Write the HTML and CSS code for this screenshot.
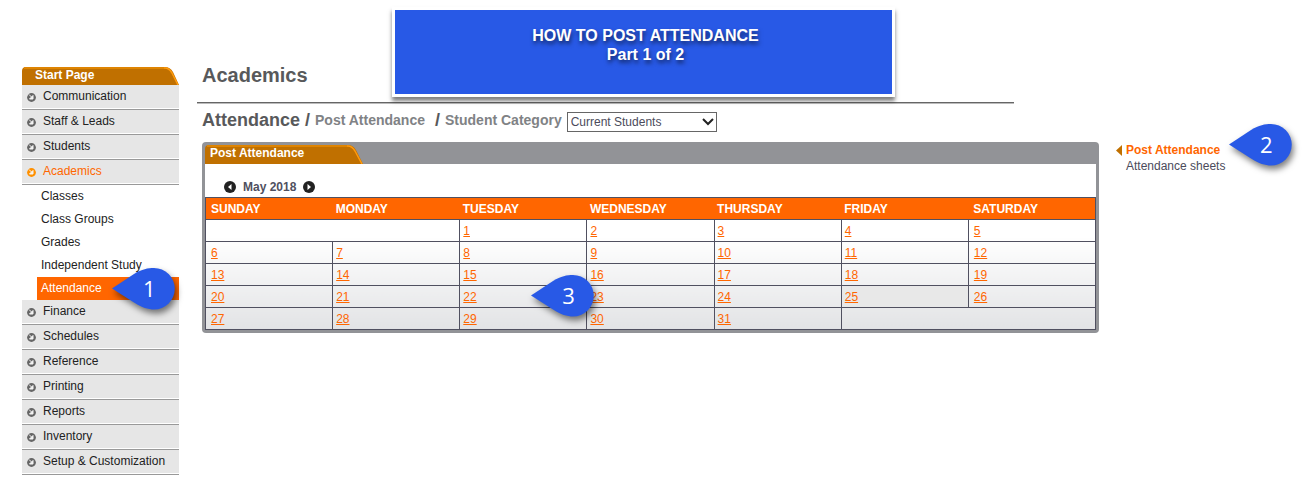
FILE: index.html
```html
<!DOCTYPE html>
<html lang="en">

<head>
    <meta charset="UTF-8">
    <meta name="viewport" content="width=device-width, initial-scale=1.0">
    <title>Post Attendance</title>
    <link rel="stylesheet" href="styles.css">
</head>

<body>

    <!-- Shared shapes -->
    <svg class="defs" width="0" height="0" aria-hidden="true">
        <symbol id="bullet" viewBox="0 0 9 9">
            <circle cx="4.5" cy="4.5" r="4.4" fill="currentColor"/>
            <path d="M2 1.500 L4.500 4 M6 2.500 V6 H2.500 Z" fill="#f4f4f4" stroke="#f4f4f4" stroke-width="1"/>
        </symbol>
        <symbol id="pin" viewBox="0 0 63 42">
            <path d="M0 20.5 L22 6 C30 1 36 0 42 0 A20.75 20.75 0 0 1 42 41.5 C36 41.5 30 39.5 22 34.5 Z" fill="#2859e6"/>
        </symbol>
    </svg>

    <div class="banner">
        <p>HOW TO POST ATTENDANCE</p>
        <p>Part 1 of 2</p>
    </div>

    <div class="page">
        <!-- Left menu -->
        <nav class="sidebar">
            <a href="#" class="tab start-page">
                <svg class="tab-shape" viewBox="0 0 157 18" aria-hidden="true">
                    <path d="M0 18 V4 Q0 0 4 0 H143 Q148 0 151 5 L157 18 Z" fill="#c07000"/>
                    <path d="M2 1 H143 Q147 1 150 6 L156 18" fill="none" stroke="#ff9a0c" stroke-width="1.5"/>
                    <path d="M2 1 H142" stroke="#d88000" stroke-width="1.5"/>
                </svg>
                <span>Start Page</span>
            </a>
            <ul class="menu">
                <li><a href="#"><svg class="bullet"><use href="#bullet"/></svg>Communication</a></li>
                <li><a href="#"><svg class="bullet"><use href="#bullet"/></svg>Staff &amp; Leads</a></li>
                <li><a href="#"><svg class="bullet"><use href="#bullet"/></svg>Students</a></li>
                <li>
                    <a href="#" class="active"><svg class="bullet"><use href="#bullet"/></svg>Academics</a>
                    <ul class="submenu">
                        <li><a href="#">Classes</a></li>
                        <li><a href="#">Class Groups</a></li>
                        <li><a href="#">Grades</a></li>
                        <li><a href="#">Independent Study</a></li>
                        <li class="current">
                            <a href="#">Attendance</a>
                            <div class="callout callout-menu"><svg><use href="#pin"/></svg><span>1</span></div>
                        </li>
                    </ul>
                </li>
                <li><a href="#"><svg class="bullet"><use href="#bullet"/></svg>Finance</a></li>
                <li><a href="#"><svg class="bullet"><use href="#bullet"/></svg>Schedules</a></li>
                <li><a href="#"><svg class="bullet"><use href="#bullet"/></svg>Reference</a></li>
                <li><a href="#"><svg class="bullet"><use href="#bullet"/></svg>Printing</a></li>
                <li><a href="#"><svg class="bullet"><use href="#bullet"/></svg>Reports</a></li>
                <li><a href="#"><svg class="bullet"><use href="#bullet"/></svg>Inventory</a></li>
                <li><a href="#"><svg class="bullet"><use href="#bullet"/></svg>Setup &amp; Customization</a></li>
            </ul>
        </nav>

        <!-- Main column -->
        <main class="main">
            <h1>Academics</h1>
            <hr>
            <div class="crumbs">
                <h2>Attendance /</h2>
                <span class="crumb">Post Attendance</span>
                <span class="slash">/</span>
                <label for="category" class="crumb">Student Category</label>
                <div class="select-box">
                    <select id="category">
                        <option>Current Students</option>
                    </select>
                    <svg viewBox="0 0 12 8" aria-hidden="true"><path d="M1 1 L6 6 L11 1" fill="none" stroke="#222" stroke-width="2"/></svg>
                </div>
            </div>

            <section class="panel">
                <div class="panel-header">
                    <div class="tab panel-tab">
                        <svg class="tab-shape" viewBox="0 0 158 19" aria-hidden="true">
                            <path d="M0 19 V4 Q0 0 4 0 H143 Q148 0 151 5 L158 19 Z" fill="#c07000"/>
                            <path d="M2 1 H143 Q147 1 150 6 L157 19" fill="none" stroke="#ff9a0c" stroke-width="1.5"/>
                            <path d="M2 1 H142" stroke="#d88000" stroke-width="1.5"/>
                        </svg>
                        <span>Post Attendance</span>
                    </div>
                </div>
                <div class="panel-body">
                    <div class="month">
                        <button type="button" aria-label="Previous month">
                            <svg viewBox="0 0 12 12"><circle cx="6" cy="6" r="6" fill="#222"/><path d="M7.5 3 V9 L4 6 Z" fill="#fff"/></svg>
                        </button>
                        <span>May 2018</span>
                        <button type="button" aria-label="Next month">
                            <svg viewBox="0 0 12 12"><circle cx="6" cy="6" r="6" fill="#222"/><path d="M4.5 3 V9 L8 6 Z" fill="#fff"/></svg>
                        </button>
                    </div>
                    <table class="calendar">
                        <thead>
                            <tr>
                                <th>SUNDAY</th>
                                <th>MONDAY</th>
                                <th>TUESDAY</th>
                                <th>WEDNESDAY</th>
                                <th>THURSDAY</th>
                                <th>FRIDAY</th>
                                <th>SATURDAY</th>
                            </tr>
                        </thead>
                        <tbody>
                            <tr>
                                <td colspan="2"></td>
                                <td><a href="#">1</a></td>
                                <td><a href="#">2</a></td>
                                <td><a href="#">3</a></td>
                                <td><a href="#">4</a></td>
                                <td><a href="#">5</a></td>
                            </tr>
                            <tr>
                                <td><a href="#">6</a></td>
                                <td><a href="#">7</a></td>
                                <td><a href="#">8</a></td>
                                <td><a href="#">9</a></td>
                                <td><a href="#">10</a></td>
                                <td><a href="#">11</a></td>
                                <td><a href="#">12</a></td>
                            </tr>
                            <tr>
                                <td><a href="#">13</a></td>
                                <td><a href="#">14</a></td>
                                <td><a href="#">15</a></td>
                                <td><a href="#">16</a></td>
                                <td><a href="#">17</a></td>
                                <td><a href="#">18</a></td>
                                <td><a href="#">19</a></td>
                            </tr>
                            <tr>
                                <td><a href="#">20</a></td>
                                <td><a href="#">21</a></td>
                                <td class="pinned">
                                    <a href="#">22</a>
                                    <div class="callout callout-day"><svg><use href="#pin"/></svg><span>3</span></div>
                                </td>
                                <td><a href="#">23</a></td>
                                <td><a href="#">24</a></td>
                                <td class="today"><a href="#">25</a></td>
                                <td><a href="#">26</a></td>
                            </tr>
                            <tr>
                                <td><a href="#">27</a></td>
                                <td><a href="#">28</a></td>
                                <td><a href="#">29</a></td>
                                <td><a href="#">30</a></td>
                                <td><a href="#">31</a></td>
                                <td colspan="2"></td>
                            </tr>
                        </tbody>
                    </table>
                </div>
            </section>
        </main>

        <!-- Right links -->
        <aside class="links">
            <a href="#" class="selected"><svg viewBox="0 0 6 11" aria-hidden="true"><path d="M6 0 V11 L0 5.5 Z" fill="#c07000"/></svg>Post Attendance</a>
            <a href="#">Attendance sheets</a>
            <div class="callout callout-link"><svg><use href="#pin"/></svg><span>2</span></div>
        </aside>
    </div>

</body>

</html>
```
FILE: styles.css
```css
body {
    margin: 0;
    background-color: #fff;
    font-family: "Liberation Sans", Arial, sans-serif;
    font-size: 12px;
    line-height: 16px;
    color: #222;
}

ul {
    list-style: none;
    margin: 0;
    padding: 0;
}

a {
    color: inherit;
    text-decoration: none;
}

.defs {
    position: absolute;
}

/* Title banner over the page */
.banner {
    position: absolute;
    top: 7px;
    left: 392px;
    z-index: 3;
    box-sizing: border-box;
    width: 503px;
    height: 90px;
    padding: 16px 0 0 4px;
    border: 3px solid #fff;
    background-color: #2859e6;
    box-shadow: 0 4px 4px rgba(0, 0, 0, 0.5);
    color: #fff;
    font-size: 16px;
    font-weight: bold;
    line-height: 19px;
    text-align: center;
    text-shadow: 1px 3px 4px rgba(0, 0, 0, 0.6);
}

.banner p {
    margin: 0;
}

.page {
    display: grid;
    grid-template-columns: 157px 1fr 194px;
    padding: 64px 18px 0 22px;
}

/* Orange tabs */
.tab {
    position: relative;
    display: block;
    color: #fff;
    font-weight: bold;
}

.tab-shape {
    position: absolute;
    top: 0;
    left: 0;
    width: 100%;
    height: 100%;
}

.tab span {
    position: relative;
}

/* Left menu */
.sidebar {
    padding-top: 3px;
}

.start-page {
    height: 18px;
    padding-left: 13px;
}

.menu > li > a {
    display: flex;
    gap: 7px;
    height: 23px;
    padding-left: 5px;
    margin-bottom: 1px;
    background-color: #e6e6e6;
    line-height: 22px;
}

.menu > li {
    border-bottom: 1px solid #999;
}

.menu > li > a.active {
    border-bottom: 1px solid #999;
    box-shadow: inset 0 -1px #fff;
    height: 24px;
    margin-bottom: 0;
    color: #ff6600;
}

.menu > li:has(.submenu) {
    border-bottom: none;
}

.bullet {
    width: 9px;
    height: 9px;
    margin-top: 8px;
    color: #666;
}

.active .bullet {
    color: #ff9000;
}

.submenu {
    padding-left: 15px;
}

.submenu li {
    position: relative;
}

.submenu a {
    display: block;
    height: 23px;
    padding-left: 4px;
    line-height: 22px;
}

.submenu .current {
    background-color: #ff6600;
    color: #fff;
}

/* Numbered pins */
.callout {
    position: absolute;
    z-index: 2;
    width: 63px;
    height: 42px;
    color: #fff;
    font-family: "Open Sans", sans-serif;
    font-size: 22px;
    line-height: 40px;
}

.callout svg {
    position: absolute;
    top: 0;
    left: 0;
    width: 63px;
    height: 42px;
    overflow: visible;
    filter: drop-shadow(2px 4px 3px rgba(0, 0, 0, 0.5));
}

.callout span {
    position: relative;
    display: block;
    padding-left: 31px;
}

.callout-menu {
    top: -9px;
    left: 75px;
}

.callout-day {
    top: -11px;
    left: 71px;
}

.callout-link {
    top: 60px;
    left: 130px;
}

/* Main column */
.main {
    padding-left: 23px;
    color: #58595b;
}

h1 {
    margin: 0;
    font-size: 20px;
    line-height: 22px;
}

hr {
    height: 1px;
    margin: 16px 85px 0 -5px;
    border: 0;
    border-top: 1px solid #666;
    background-color: #bbb;
}

.crumbs {
    display: flex;
    align-items: flex-start;
    gap: 5px;
    margin: 7px 0 10px;
    height: 21px;
}

h2,
.slash {
    margin: 0;
    font-size: 18px;
    font-weight: bold;
    line-height: 18px;
}

.crumb {
    color: #808285;
    font-size: 14px;
    font-weight: bold;
    line-height: 19px;
}

.slash {
    padding-left: 5px;
}

.select-box {
    position: relative;
    padding-top: 1px;
}

.select-box select {
    display: block;
    width: 150px;
    height: 20px;
    padding: 0 3px;
    border: 1px solid #666;
    border-radius: 0;
    background-color: #fff;
    appearance: none;
    color: #4b4b5b;
    font: inherit;
}

.select-box svg {
    position: absolute;
    top: 7px;
    right: 3px;
    width: 12px;
    height: 8px;
    pointer-events: none;
}

/* Calendar panel */
.panel {
    padding: 0 3px 3px;
    border-radius: 4px;
    background-color: #929397;
}

.panel-header {
    padding-top: 3px;
}

.panel-tab {
    width: 158px;
    height: 19px;
    text-indent: 5px;
}

.panel-body {
    background-color: #fff;
}

.month {
    display: flex;
    align-items: center;
    gap: 7px;
    height: 19px;
    padding: 13px 0 1px 19px;
    color: #505060;
    font-weight: bold;
}

.month button {
    width: 12px;
    height: 12px;
    padding: 0;
    border: 0;
    background: none;
    cursor: pointer;
}

.month svg {
    display: block;
}

.calendar {
    width: 100%;
    table-layout: fixed;
    border-collapse: collapse;
    border: 1px solid #505060;
    background: linear-gradient(#fff 30%, #e2e3e5);
}

.calendar th,
.calendar td {
    height: 20px;
    padding: 1px 0 0 3px;
    line-height: 20px;
    text-align: left;
}

.calendar th {
    background-color: #ff6600;
    color: #fff;
}

.calendar td {
    border: 1px solid #505060;
}

.calendar th:first-child,
.calendar td:first-child,
.calendar th:last-child,
.calendar td:last-child {
    padding-left: 5px;
}

.calendar td a {
    color: #ff6600;
    text-decoration: underline;
}

.calendar .pinned {
    position: relative;
}

.calendar .today {
    background-color: #e8e8e8;
}

/* Right links */
.links {
    position: relative;
    padding: 78px 0 0 16px;
    color: #4b4b5b;
}

.links a {
    display: flex;
    align-items: center;
    padding-left: 11px;
}

.links .selected {
    gap: 4px;
    padding-left: 1px;
    color: #ff6600;
    font-weight: bold;
}

.links a svg {
    width: 6px;
    height: 11px;
}
```
